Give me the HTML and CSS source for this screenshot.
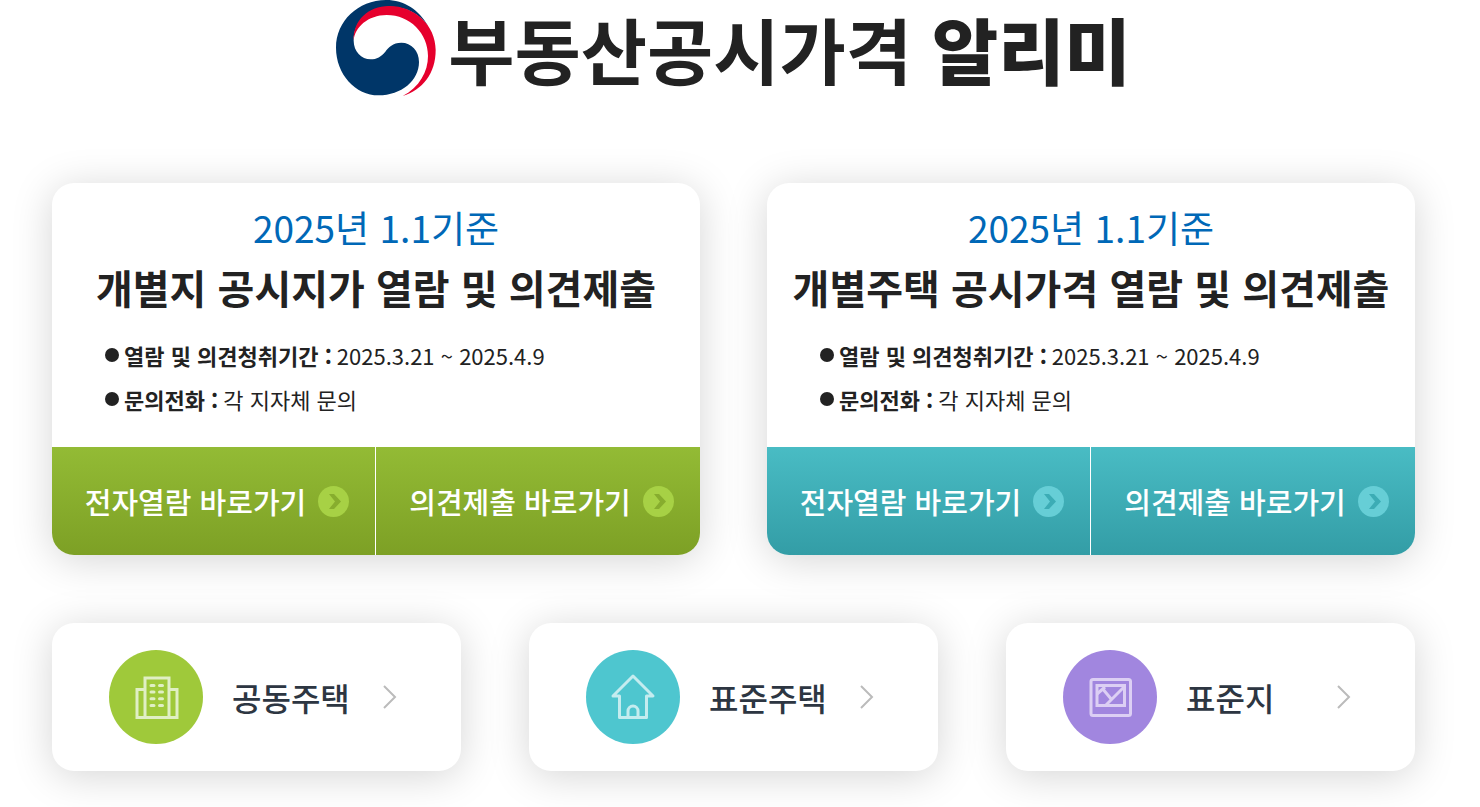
FILE: index.html
```html
<!DOCTYPE html>
<html lang="ko">
<head>
    <meta charset="UTF-8">
    <meta name="viewport" content="width=device-width, initial-scale=1.0">
    <title>부동산공시가격 알리미</title>
    <link rel="stylesheet" href="styles.css">
</head>
<body>
    <!-- Header -->
    <header class="header">
        <svg class="logo" viewBox="0 0 300 291" aria-hidden="true">
            <path fill="#003668" d="M276 78C250 30 205 0 150 0C66 0 0 64 0 143C0 222 58 286 128 286C196 286 249 242 249 186C249 152 226 128 196 128C170 128 158 142 148 155C136 170 122 178 104 178C76 178 53 154 53 122C53 62 100 20 160 20C210 20 250 40 276 78Z"/>
            <path fill="#e6002d" d="M53 122C50 60 100 17 160 18C235 18 299 75 299 150C299 220 260 270 200 288C250 262 276 215 276 168C276 100 222 45 152 45C96 45 56 82 53 122Z"/>
        </svg>
        <h1 class="title">부동산공시가격 <strong>알리미</strong></h1>
    </header>

    <main>
        <!-- Notice cards -->
        <div class="notices">
            <section class="card notice green">
                <div class="notice-body">
                    <h2><span class="base-date">2025년 1.1기준</span>개별지 공시지가 열람 및 의견제출</h2>
                    <ul>
                        <li><b>열람 및 의견청취기간 :</b> 2025.3.21 ~ 2025.4.9</li>
                        <li><b>문의전화 :</b> 각 지자체 문의</li>
                    </ul>
                </div>
                <div class="links">
                    <a href="#">전자열람 바로가기
                        <svg class="go" viewBox="0 0 31 31" aria-hidden="true"><circle cx="15.500" cy="15.500" r="15.500"/><path d="M11 8h5l7 7.500-7 7.500h-5l6-7.500z"/></svg>
                    </a>
                    <a href="#">의견제출 바로가기
                        <svg class="go" viewBox="0 0 31 31" aria-hidden="true"><circle cx="15.500" cy="15.500" r="15.500"/><path d="M11 8h5l7 7.500-7 7.500h-5l6-7.500z"/></svg>
                    </a>
                </div>
            </section>

            <section class="card notice teal">
                <div class="notice-body">
                    <h2><span class="base-date">2025년 1.1기준</span>개별주택 공시가격 열람 및 의견제출</h2>
                    <ul>
                        <li><b>열람 및 의견청취기간 :</b> 2025.3.21 ~ 2025.4.9</li>
                        <li><b>문의전화 :</b> 각 지자체 문의</li>
                    </ul>
                </div>
                <div class="links">
                    <a href="#">전자열람 바로가기
                        <svg class="go" viewBox="0 0 31 31" aria-hidden="true"><circle cx="15.500" cy="15.500" r="15.500"/><path d="M11 8h5l7 7.500-7 7.500h-5l6-7.500z"/></svg>
                    </a>
                    <a href="#">의견제출 바로가기
                        <svg class="go" viewBox="0 0 31 31" aria-hidden="true"><circle cx="15.500" cy="15.500" r="15.500"/><path d="M11 8h5l7 7.500-7 7.500h-5l6-7.500z"/></svg>
                    </a>
                </div>
            </section>
        </div>

        <!-- Menu -->
        <nav class="menu">
            <a class="card menu-item" href="#">
                <svg class="icon" viewBox="0 0 94 94" aria-hidden="true">
                    <circle cx="47" cy="47" r="47" fill="#9fc93a"/>
                    <g class="line">
                        <path d="M36 67.500V28h24v39.500M36 39.500h-8v28h40v-28h-8"/>
                        <path class="windows" d="M42 35.500h3M50.500 35.500h3M42 42h3M50.500 42h3M42 48.800h3M50.500 48.800h3M42 55.500h3M50.500 55.500h3"/>
                    </g>
                </svg>
                <span>공동주택</span>
                <svg class="arrow" viewBox="0 0 14 24" aria-hidden="true"><path d="M1 1l11 11L1 23"/></svg>
            </a>
            <a class="card menu-item" href="#">
                <svg class="icon" viewBox="0 0 94 94" aria-hidden="true">
                    <circle cx="47" cy="47" r="47" fill="#4ec6cf"/>
                    <g class="line">
                        <path d="M33.500 46h-6.500L47 26l20 20h-6.500v21.500h-27z"/>
                        <path d="M42 67V61a5 5 0 0 1 10 0v6"/>
                    </g>
                </svg>
                <span>표준주택</span>
                <svg class="arrow" viewBox="0 0 14 24" aria-hidden="true"><path d="M1 1l11 11L1 23"/></svg>
            </a>
            <a class="card menu-item" href="#">
                <svg class="icon" viewBox="0 0 94 94" aria-hidden="true">
                    <circle cx="47" cy="47" r="47" fill="#a186df"/>
                    <g class="line purple">
                        <rect x="28" y="29.500" width="39.500" height="36" rx="2"/>
                        <rect x="34" y="35.500" width="27.500" height="20"/>
                        <path d="M34 44l8-7M39 38l10 12M61 37L43 55"/>
                    </g>
                </svg>
                <span>표준지</span>
                <svg class="arrow" viewBox="0 0 14 24" aria-hidden="true"><path d="M1 1l11 11L1 23"/></svg>
            </a>
        </nav>
    </main>
</body>
</html>
```
FILE: styles.css
```css
* {
    box-sizing: border-box;
}

body {
    margin: 0;
    padding: 0 65px 36px 52px;
    font-family: "Noto Sans CJK KR", sans-serif;
    color: #222;
    background: #fff;
}

a {
    color: inherit;
    text-decoration: none;
}

/* Header */
.header {
    display: flex;
    justify-content: center;
    gap: 12px;
    height: 183px;
}

.logo {
    width: 100px;
    height: 97px;
}

.title {
    margin: 0;
    font-size: 72px;
    font-weight: 700;
    line-height: 96px;
}

.title strong {
    font-weight: 900;
}

/* Cards */
.card {
    background: #fff;
    border-radius: 22px;
    box-shadow: 0 5px 40px rgba(0, 0, 0, 0.17);
}

.notices {
    display: grid;
    grid-template-columns: repeat(2, 1fr);
    gap: 67px;
    margin-bottom: 68px;
}

.notice {
    overflow: hidden;
}

.notice-body {
    padding: 14px 0 26px;
}

.notice h2 {
    margin: 0 0 16px;
    font-size: 40px;
    font-weight: 700;
    line-height: 60px;
    text-align: center;
}

.base-date {
    display: block;
    font-size: 37px;
    font-weight: 400;
    color: #0068b7;
}

.notice ul {
    margin: 0;
    padding: 0 53px;
    list-style: none;
}

.notice li {
    display: flex;
    align-items: center;
    gap: 5px;
    font-size: 22px;
    line-height: 44px;
}

.notice li::before {
    content: "";
    width: 14px;
    height: 14px;
    border-radius: 50%;
    background: #222;
}

.links {
    display: grid;
    grid-template-columns: repeat(2, 1fr);
    color: #fff;
}

.links a {
    display: flex;
    justify-content: center;
    align-items: center;
    gap: 12px;
    height: 108px;
    padding-left: 7px;
    font-size: 29px;
    font-weight: 500;
}

.links a:first-child {
    border-right: 1px solid #fff;
}

.go {
    width: 31px;
    height: 31px;
}

.green .links a {
    background: linear-gradient(#93bb35, #7da025);
}

.green .go {
    fill: #a7d145;
}

.green .go path {
    fill: #87ad2e;
}

.teal .links a {
    background: linear-gradient(#49bcc4, #339da6);
}

.teal .go {
    fill: #66ced6;
}

.teal .go path {
    fill: #3cacb5;
}

/* Menu */
.menu {
    display: grid;
    grid-template-columns: repeat(3, 1fr);
    gap: 68px;
}

.menu-item {
    display: flex;
    align-items: center;
    gap: 29px;
    height: 148px;
    padding: 0 64px 0 57px;
    font-size: 32px;
    font-weight: 500;
    color: #2d3642;
}

.icon {
    width: 94px;
    height: 94px;
}

.line {
    fill: none;
    stroke: #e0efc4;
    stroke-width: 3;
}

.line .windows {
    stroke-linecap: round;
}

.menu-item:nth-child(2) .line {
    stroke: #c4ecef;
    stroke-linejoin: round;
}

.line.purple {
    stroke: #dccff4;
}

.arrow {
    width: 14px;
    height: 24px;
    margin-left: auto;
    fill: none;
    stroke: #bbb;
    stroke-width: 2;
}
```
